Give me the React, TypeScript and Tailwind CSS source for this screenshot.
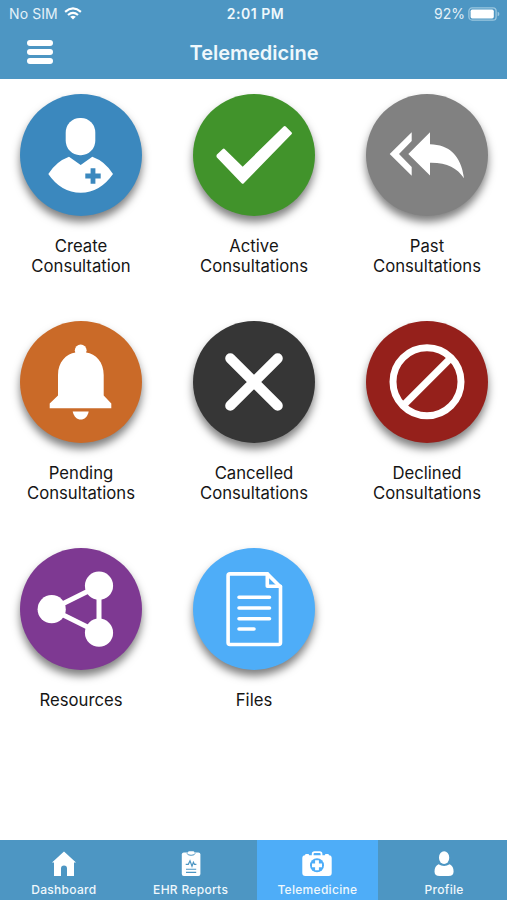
import type { ReactNode } from 'react';

interface MenuItem {
  id: string;
  lines: string[];
  color: string;
  icon: ReactNode;
}

interface TabItem {
  id: string;
  label: string;
  icon: ReactNode;
}

// Tile drawings share the 122x122 box of their circle
const menuItems: MenuItem[] = [
  {
    id: 'create',
    lines: ['Create', 'Consultation'],
    color: 'bg-[#3b88be]',
    icon: (
      <>
        <rect x="45.7" y="23.9" width="29.6" height="37.3" rx="14.2" ry="14.8" />
        <path d="M49 62.7L60.7 71L72.3 62.7Q85.5 67.5 93 80Q80 98.7 60.7 98.7Q41 98.7 28.3 80Q36 67.5 49 62.7Z" />
        <path d="M73 74.3V89.7M65.3 82H80.7" stroke="#3b88be" strokeWidth="4.8" />
      </>
    ),
  },
  {
    id: 'active',
    lines: ['Active', 'Consultations'],
    color: 'bg-[#41932b]',
    icon: (
      <path
        d="M25 61.7L30.8 56.2L49.7 74.8L91.7 33.6L97.4 39.3L49.7 88.2L25 62.5Z"
        stroke="white"
        strokeWidth="3"
        strokeLinejoin="round"
      />
    ),
  },
  {
    id: 'past',
    lines: ['Past', 'Consultations'],
    color: 'bg-[#818181]',
    icon: (
      <>
        <path d="M23.7 60L45.7 38.3V46.9L33 60L45.7 72.9V81.7Z" />
        <path d="M42.3 60L64 38.3V50.3C83 50.8 95 61 98 84.3C91 74 81 68.5 64 68.8V81.5Z" />
      </>
    ),
  },
  {
    id: 'pending',
    lines: ['Pending', 'Consultations'],
    color: 'bg-[#ca6a28]',
    icon: (
      <>
        <circle cx="60.7" cy="29.3" r="5.9" />
        <path d="M38 54C38 41 46 33 55.5 31.5H66C76 33 83.7 41 83.7 54V74.5L91.3 82.5V87.2H29.7V82.5L38 74.5Z" />
        <path d="M52.7 90.5H68.7C67.5 96 64.5 98.5 60.7 98.5C57 98.5 54 96 52.7 90.5Z" />
      </>
    ),
  },
  {
    id: 'cancelled',
    lines: ['Cancelled', 'Consultations'],
    color: 'bg-[#363636]',
    icon: (
      <path d="M37.3 37.3L84.7 84.7M84.7 37.3L37.3 84.7" stroke="white" strokeWidth="10.2" strokeLinecap="round" />
    ),
  },
  {
    id: 'declined',
    lines: ['Declined', 'Consultations'],
    color: 'bg-[#95201b]',
    icon: (
      <g fill="none" stroke="white" strokeWidth="7">
        <circle cx="61" cy="60.8" r="34" />
        <path d="M37.5 84.3L84.5 37.3" />
      </g>
    ),
  },
  {
    id: 'resources',
    lines: ['Resources'],
    color: 'bg-[#7e3992]',
    icon: (
      <>
        <path d="M79 37.7L31.7 61.3L79 84.7Z" fill="none" stroke="white" strokeWidth="5" />
        <circle cx="31.7" cy="61.2" r="14.1" />
        <circle cx="79" cy="37.7" r="14.1" />
        <circle cx="79" cy="84.7" r="14.1" />
      </>
    ),
  },
  {
    id: 'files',
    lines: ['Files'],
    color: 'bg-[#4eadf8]',
    icon: (
      <g fill="none" stroke="white" strokeWidth="3.6" strokeLinecap="round" strokeLinejoin="round">
        <path d="M37 25.9H74.3L87.5 39V94.5Q87.5 96.5 85.5 96.5H37Q35.1 96.5 35.1 94.5V27.8Q35.1 25.9 37 25.9Z" />
        <path d="M74.3 25.9V38.3H87.5" />
        <path d="M46 49.3H76.5M46 60H76.5M46 70.7H76.5M46 81H61" />
      </g>
    ),
  },
];

const tabs: TabItem[] = [
  {
    id: 'dashboard',
    label: 'Dashboard',
    icon: <path d="M15 0.5L27 11.5H25V25H18V17.5Q18 14.5 15 14.5Q12 14.5 12 17.5V25H5V11.5H3Z" />,
  },
  {
    id: 'ehr',
    label: 'EHR Reports',
    icon: (
      <>
        <rect x="5.8" y="1.5" width="18.6" height="23.5" rx="2" />
        <rect x="12" y="0.3" width="6.4" height="3" rx="1.3" />
        <g fill="none" stroke="#4d96c3">
          <path d="M11 2.3Q11.5 4.3 15.1 4.3Q18.7 4.3 19.2 2.3" strokeWidth="1" />
          <path d="M9.7 13.3H12.3L14 9.8L16 15.2L17.4 11.3L18.4 13.3H20.4" strokeWidth="1.2" />
          <path d="M10 18.2H20.2M10 21.4H20.2" strokeWidth="1.1" />
        </g>
      </>
    ),
  },
  {
    id: 'telemedicine',
    label: 'Telemedicine',
    icon: (
      <>
        <path d="M10.7 5V3Q10.7 1.2 12.5 1.2H17.7Q19.5 1.2 19.5 3V5" fill="none" stroke="white" strokeWidth="1.8" />
        <path d="M3 4.2Q3 3 4.2 3H6Q7.2 3 7.2 4.2H22.8Q22.8 3 24 3H25.8Q27 3 27 4.2Q29.7 4.5 29.7 7V22Q29.7 25 26.7 25H3.3Q0.3 25 0.3 22V7Q0.3 4.5 3 4.2Z" />
        <circle cx="15" cy="14.3" r="7" fill="#4eadf8" />
        <path d="M15 9.3V19.3M10 14.3H20" stroke="white" strokeWidth="3.8" />
      </>
    ),
  },
  {
    id: 'profile',
    label: 'Profile',
    icon: (
      <>
        <rect x="10" y="0.3" width="10.2" height="12.7" rx="5.1" ry="6" />
        <path d="M9.5 13.2Q15 16.8 20.7 13.2Q24.6 15 24.6 20.5Q24.6 25 19.5 25H10.7Q5.5 25 5.5 20.5Q5.5 15 9.5 13.2Z" />
      </>
    ),
  },
];

function StatusBar() {
  return (
    <div className="grid grid-cols-3 h-7 pl-[9px] pr-[7px] text-[14px] leading-7">
      <div className="flex items-center gap-[6px] text-[#e4f1f8]">
        <span className="tracking-[0.1px]">No SIM</span>
        <svg width="18" height="13" viewBox="0 0 18 13" className="mb-0.5 text-white">
          <g fill="none" stroke="currentColor" strokeWidth="2.2">
            <path d="M1.1 4.8Q9 -1.9 16.9 4.8" />
            <path d="M4 8Q9 3.8 14 8" />
          </g>
          <path d="M6.2 9.7Q9 7.6 11.8 9.7L9 12.5Z" fill="currentColor" />
        </svg>
      </div>
      <div className="pl-0.5 text-center font-semibold text-[#eff8fc] tracking-[0.5px]">2:01 PM</div>
      <div className="flex items-center justify-end gap-[3px] text-[#e4f1f8]">
        <span>92%</span>
        <svg width="32" height="14" viewBox="0 0 32 14" className="mb-px">
          <rect x="0.9" y="0.9" width="27.2" height="12.2" rx="3.2" fill="none" stroke="#9bc7e0" strokeWidth="1.3" />
          <rect x="2.6" y="2.6" width="23.2" height="8.8" rx="1.6" fill="white" />
          <path d="M29.6 4.8Q31.4 5.2 31.4 7Q31.4 8.8 29.6 9.2Z" fill="#9bc7e0" />
        </svg>
      </div>
    </div>
  );
}

function Header() {
  return (
    <div className="grid grid-cols-[1fr_auto_1fr] items-center h-[51px] px-[27px]">
      <button aria-label="Menu" className="flex flex-col gap-[3.6px] w-[26px] pb-[3px]">
        <span className="h-[5.4px] rounded-full bg-white" />
        <span className="h-[5.4px] rounded-full bg-white" />
        <span className="h-[5.4px] rounded-full bg-white" />
      </button>
      <h1 className="pb-0.5 pl-px text-[20px] leading-6 font-semibold text-[#eff8fc]">Telemedicine</h1>
    </div>
  );
}

function MenuTile({ item }: { item: MenuItem }) {
  return (
    <button className="flex flex-col items-center h-[227px]">
      <span className={`size-[122px] rounded-full shadow-[0_6px_9px_rgba(0,0,0,0.5)] ${item.color}`}>
        <svg width="122" height="122" viewBox="0 0 122 122" fill="white">
          {item.icon}
        </svg>
      </span>
      <span className="mt-[19.6px] text-[16.7px] leading-[20.2px] text-[#151515]">
        {item.lines.map((line) => (
          <span key={line} className="block">{line}</span>
        ))}
      </span>
    </button>
  );
}

function TabBar({ active }: { active: string }) {
  return (
    <nav className="grid grid-cols-4 h-[60px] bg-[#4d96c3]">
      {tabs.map((tab) => (
        <button
          key={tab.id}
          className={`flex flex-col items-center mr-[2px] ml-[3px] pt-[10.5px] ${tab.id === active ? 'bg-[#4eadf8]' : ''}`}
        >
          <svg width="30" height="26" viewBox="0 0 30 26" fill="white">
            {tab.icon}
          </svg>
          <span className="mt-[5px] text-[12px] leading-4 font-medium tracking-[0.3px] whitespace-nowrap text-[#eff8fc]">
            {tab.label}
          </span>
        </button>
      ))}
    </nav>
  );
}

export default function App() {
  return (
    <div className="flex flex-col h-screen bg-white font-['Inter',sans-serif] overflow-hidden">
      <header className="bg-[#4d96c3]">
        <StatusBar />
        <Header />
      </header>
      <main className="grid grid-cols-[repeat(3,173px)] content-start justify-center flex-1 pt-[15.3px] pl-px">
        {menuItems.map((item) => (
          <MenuTile key={item.id} item={item} />
        ))}
      </main>
      <TabBar active="telemedicine" />
    </div>
  );
}
